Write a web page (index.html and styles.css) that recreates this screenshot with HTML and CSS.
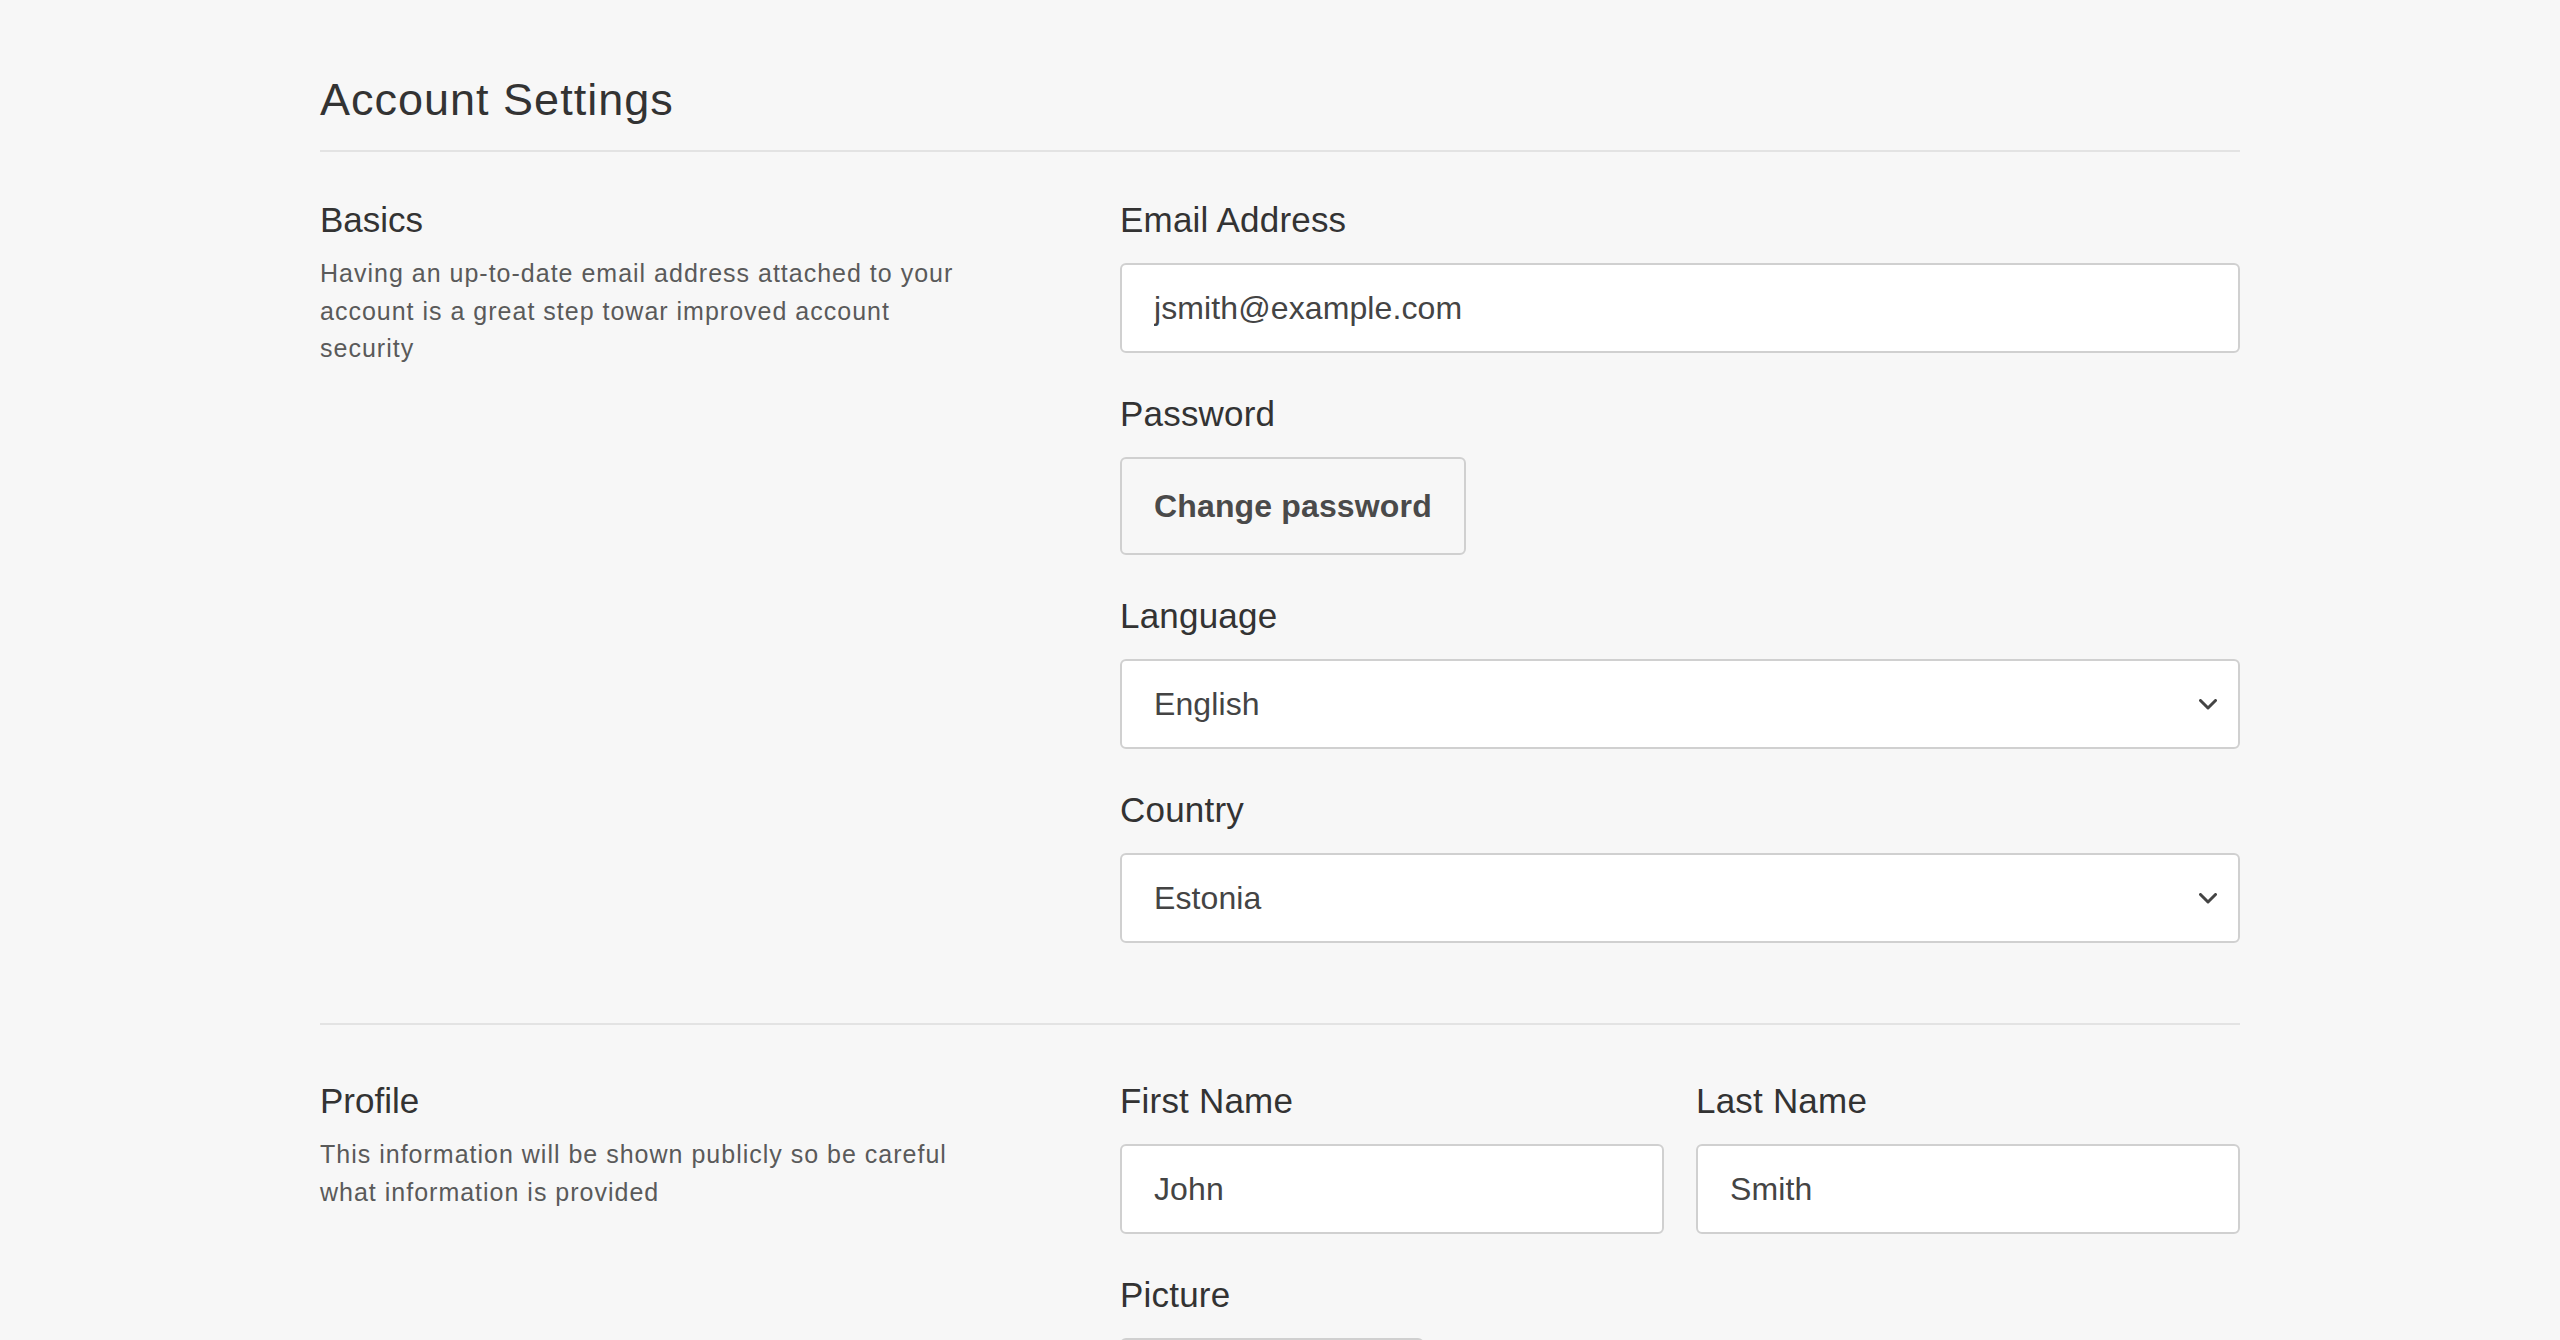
FILE: index.html
```html
<!DOCTYPE html>
<html lang="en">
<head>
<meta charset="utf-8">
<title>Account Settings</title>
<link rel="stylesheet" href="styles.css">
</head>
<body>
<main class="page">
  <header class="page-header">
    <h1 class="page-title">Account Settings</h1>
  </header>

  <section class="section">
    <div class="section-info">
      <h2 class="section-title">Basics</h2>
      <p class="section-desc">Having an up-to-date email address attached to your account is a great step towar improved account security</p>
    </div>
    <div class="section-fields">
      <div class="field">
        <label class="field-label" for="email">Email Address</label>
        <input class="text-input" id="email" type="text" value="jsmith@example.com">
      </div>
      <div class="field">
        <span class="field-label">Password</span>
        <div><button class="btn" type="button">Change password</button></div>
      </div>
      <div class="field">
        <label class="field-label" for="lang">Language</label>
        <div class="select-wrap">
          <select class="select" id="lang"><option>English</option></select>
          <svg class="chevron" width="18" height="11" viewBox="0 0 18 11"><path d="M1.5 1.5 L9 9 L16.5 1.5" fill="none" stroke="#444" stroke-width="3" stroke-linecap="round" stroke-linejoin="round"/></svg>
        </div>
      </div>
      <div class="field">
        <label class="field-label" for="country">Country</label>
        <div class="select-wrap">
          <select class="select" id="country"><option>Estonia</option></select>
          <svg class="chevron" width="18" height="11" viewBox="0 0 18 11"><path d="M1.5 1.5 L9 9 L16.5 1.5" fill="none" stroke="#444" stroke-width="3" stroke-linecap="round" stroke-linejoin="round"/></svg>
        </div>
      </div>
    </div>
  </section>

  <section class="section section-second">
    <div class="section-info">
      <h2 class="section-title">Profile</h2>
      <p class="section-desc">This information will be shown publicly so be careful what information is provided</p>
    </div>
    <div class="section-fields">
      <div class="field-row">
        <div class="field">
          <label class="field-label" for="first">First Name</label>
          <input class="text-input" id="first" type="text" value="John">
        </div>
        <div class="field">
          <label class="field-label" for="last">Last Name</label>
          <input class="text-input" id="last" type="text" value="Smith">
        </div>
      </div>
      <div class="field">
        <span class="field-label">Picture</span>
        <div class="picture-box"></div>
      </div>
    </div>
  </section>
</main>
</body>
</html>
```

FILE: styles.css
```css
* { box-sizing: border-box; }

html, body {
  margin: 0;
  padding: 0;
  background: #f7f7f7;
}

body {
  font-family: "Liberation Sans", Arial, Helvetica, sans-serif;
  color: #333;
  overflow: hidden;
}

.page {
  width: 1920px;
  margin: 0 auto;
  padding-top: 73px;
}

.page-header {
  padding-bottom: 23px;
  border-bottom: 2px solid #e3e3e3;
}

.page-title {
  margin: 0;
  font-size: 45px;
  line-height: 54px;
  font-weight: 400;
  letter-spacing: 1px;
  color: #333;
}

.section {
  display: grid;
  grid-template-columns: 800px 1120px;
  padding: 47px 0 80px;
}

.section-second {
  border-top: 2px solid #e3e3e3;
  padding-top: 55px;
}

.section-title {
  margin: 0;
  font-size: 35px;
  line-height: 42px;
  font-weight: 400;
  color: #333;
}

.section-desc {
  margin: 14px 0 0;
  max-width: 640px;
  font-size: 25px;
  line-height: 37.5px;
  letter-spacing: 1px;
  color: #5a5a5a;
}

.section-fields {
  display: flex;
  flex-direction: column;
  gap: 40px;
}

.field-row {
  display: grid;
  grid-template-columns: 1fr 1fr;
  gap: 32px;
}

.field {
  display: flex;
  flex-direction: column;
}

.field-label {
  display: block;
  font-size: 35px;
  line-height: 42px;
  letter-spacing: 0.2px;
  margin-bottom: 22px;
  color: #333;
}

.text-input,
.select {
  display: block;
  width: 100%;
  height: 90px;
  margin: 0;
  padding: 19px 32px;
  font-family: "Liberation Sans", Arial, Helvetica, sans-serif;
  font-size: 32px;
  line-height: 48px;
  letter-spacing: 0.1px;
  color: #444;
  background: #fff;
  border: 2px solid #d0d0d0;
  border-radius: 6px;
  outline: none;
}

.select {
  -webkit-appearance: none;
  appearance: none;
  padding-right: 80px;
}

.select-wrap {
  position: relative;
}

.chevron {
  position: absolute;
  right: 23px;
  top: 40px;
  pointer-events: none;
}

.btn {
  display: inline-block;
  margin: 0;
  padding: 23px 32px;
  font-family: "Liberation Sans", Arial, Helvetica, sans-serif;
  font-size: 32px;
  line-height: 48px;
  font-weight: 700;
  letter-spacing: 0.15px;
  color: #4a4a4a;
  background: #f7f7f7;
  border: 2px solid #d0d0d0;
  border-radius: 6px;
  cursor: pointer;
}

.picture-box {
  width: 304px;
  height: 98px;
  background: #f7f7f7;
  border: 2px solid #d0d0d0;
  border-radius: 6px;
}
```
